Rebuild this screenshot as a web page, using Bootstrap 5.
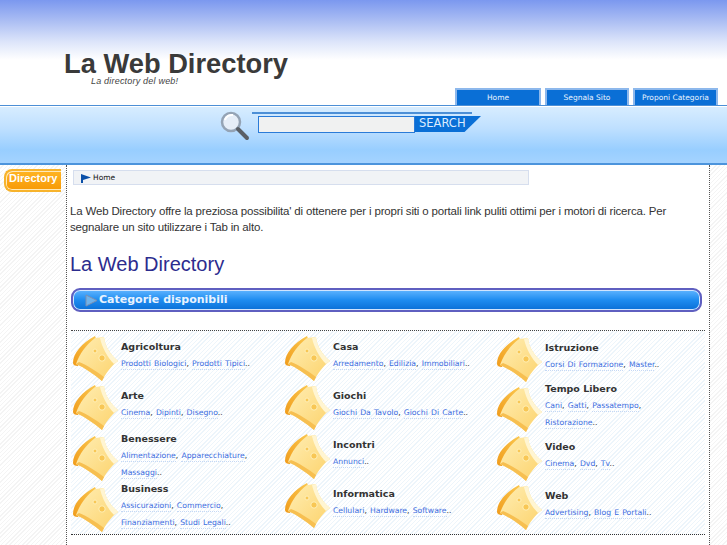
<!DOCTYPE html>
<html lang="it">
  <head>
    <meta charset="UTF-8" />
    <meta name="viewport" content="width=device-width, initial-scale=1.0" />
    <title>La Web Directory</title>
    <link
      href="https://cdn.jsdelivr.net/npm/bootstrap@5.3.2/dist/css/bootstrap.min.css"
      rel="stylesheet"
    />
    <style>
      body {
        font-family: "Liberation Sans", Arial, sans-serif;
        color: #333;
        background: #fff;
      }
      .top-head {
        height: 105px;
        padding: 51px 9px 0 64px;
        background: linear-gradient(#7b98ef 0, #a9bcf3 20px, #dde5fa 42px, #fff 60px);
      }
      .site-title {
        font-size: 27.3px;
        line-height: 26px;
        font-weight: 700;
        color: #3a3a3a;
        margin: 0;
      }
      .site-sub {
        font-size: 9px;
        line-height: 8px;
        font-style: italic;
        color: #444;
        margin: 0 0 0 27px;
        letter-spacing: 0.2px;
      }
      .tab-list {
        margin-top: auto;
        gap: 4px;
      }
      .tab-link {
        display: block;
        height: 17px;
        width: 86px;
        background: #0a6fd6;
        border: 2px solid #8db8ec;
        border-bottom: 0;
        color: #e8f3ff;
        font-family: "DejaVu Sans", sans-serif;
        font-size: 7.5px;
        line-height: 16px;
        text-align: center;
        text-decoration: none;
        white-space: nowrap;
      }
      .tab-mid {
        width: 84px;
      }
      .tab-last {
        width: 85px;
      }
      .search-band {
        height: 60px;
        border-top: 1px solid #4c8fd6;
        border-bottom: 2px solid #4c94dc;
        box-shadow: inset 0 1px 0 #fff;
        background: linear-gradient(#d8edff 0, #bfe0ff 22px, #98ceff 44px, #a4d3ff 100%);
        padding: 5px 0 0 220px;
      }
      .search-form {
        width: 262px;
        position: relative;
        padding: 5px 0 0 38px;
      }
      .search-form::before {
        content: "";
        position: absolute;
        left: 32px;
        top: 1px;
        width: 220px;
        height: 2px;
        background: #4c8fd6;
      }
      .search-input {
        width: 157px;
        height: 17px;
        border: 1px solid #2a7bd8;
        background: #f0f1f1;
        padding: 0;
      }
      .search-btn {
        width: 66px;
        height: 16px;
        border: 0;
        padding: 0 0 2px 4px;
        background: #0a6fd6;
        color: #dcecff;
        font-family: "DejaVu Sans", sans-serif;
        font-size: 11.5px;
        line-height: 14px;
        text-align: left;
        clip-path: polygon(0 0, 100% 0, 75% 100%, 0 100%);
      }
      .page-body {
        height: 380px;
        overflow: hidden;
      }
      .hatch-grey {
        background: repeating-linear-gradient(135deg, #fff 0 2px, #f4f4f4 2px 3px);
      }
      .side-col {
        width: 67px;
        flex: none;
        padding: 4px 0 0 4px;
        border-right: 1px dotted #555;
      }
      .side-btn {
        height: 23px;
        width: 57px;
        border-radius: 8px 0 0 8px;
        border: 2px solid #f7b32c;
        border-right: 0;
        box-shadow: inset 1px 1px 0 #ffe9b8, inset 0 -1px 0 #ffe9b8;
        background: linear-gradient(#ffb423, #f79a06);
        color: #fff;
        font-size: 11px;
        font-weight: 700;
        line-height: 14px;
        padding: 0 0 0 3px;
        white-space: nowrap;
        overflow: hidden;
      }
      .main-col {
        width: 642px;
        flex: none;
        padding: 5px 0 0 3px;
        background: #fff;
      }
      .right-col {
        flex: 1;
        border-left: 1px dotted #555;
      }
      .crumb-bar {
        width: 456px;
        height: 15px;
        margin-left: 3px;
        padding: 1px 0 0 7px;
        background: #f1f3f6;
        border: 1px solid #d6deee;
        font-family: "DejaVu Sans", sans-serif;
        font-size: 7.5px;
        line-height: 12px;
        color: #111;
      }
      .home-label {
        margin-left: 2px;
      }
      .intro-text {
        font-size: 11.5px;
        letter-spacing: -0.17px;
        line-height: 16px;
        margin: 18px 0 0;
        width: 610px;
        color: #333;
      }
      .dir-title {
        font-size: 20px;
        line-height: 24px;
        font-weight: 400;
        color: #2c2c8e;
        margin: 17px 0 0;
      }
      .cat-bar {
        width: 631px;
        height: 24px;
        margin: 12px 0 0 1px;
        padding-left: 12px;
        gap: 1px;
        border: 2px solid #5f5fc0;
        border-radius: 9px;
        box-shadow: inset 0 0 0 1px #cfe4ff;
        background: linear-gradient(#5fb4ff 0, #1e8cf0 50%, #0a6fd6 100%);
        color: #e8f3ff;
        font-family: "DejaVu Sans", sans-serif;
        font-size: 11px;
        font-weight: 700;
        line-height: 20px;
        white-space: nowrap;
      }
      .cat-grid {
        width: 634px;
        margin: 18px 0 0 1px;
        padding-top: 2px;
        padding-bottom: 1px;
        border-top: 1px dotted #444;
        border-bottom: 1px dotted #333;
        background: repeating-linear-gradient(135deg, #fff 0 2px, #edf5fb 2px 3px);
      }
      .cat-stack {
        width: 212px;
        flex: none;
      }
      .cat-cell {
        height: 49px;
        margin-left: -1px;
      }
      .cat-h50 {
        height: 50px;
      }
      .cat-h51 {
        height: 51px;
      }
      .cat-h52 {
        height: 52px;
      }
      .cat-icon {
        width: 50px;
        height: 50px;
        flex: none;
        margin-right: 1px;
      }
      .cat-text {
        max-width: 150px;
        margin-bottom: 4px;
      }
      .cat-name {
        font-family: "DejaVu Sans", sans-serif;
        font-size: 9.5px;
        line-height: 14px;
        font-weight: 700;
        color: #333;
      }
      .cat-links {
        font-family: "DejaVu Sans", sans-serif;
        font-size: 7.7px;
        line-height: 17px;
        margin-top: 1px;
        color: #333;
        word-spacing: 0.7px;
      }
      .cat-links a {
        color: #3c6de0;
        text-decoration: none;
        border-bottom: 1px dotted #c5d8f5;
        padding-bottom: 1px;
      }
    </style>
  </head>
  <body>
    <svg width="0" height="0" class="d-block">
      <defs>
        <linearGradient id="pieGrad" x1="0" y1="0" x2="1" y2="1">
          <stop offset="0" stop-color="#ffeeb4" />
          <stop offset="1" stop-color="#fcd26a" />
        </linearGradient>
        <linearGradient id="wingGrad" x1="1" y1="0" x2="0" y2="1">
          <stop offset="0" stop-color="#fbc850" />
          <stop offset="1" stop-color="#f09c1c" />
        </linearGradient>
        <symbol id="catIcon" viewBox="0 0 50 50">
          <path d="M3 30C3 20 12 10 25 3L27 8C17 14 11 22 8 33C5 33 3 32 3 30Z" fill="url(#wingGrad)" />
          <path d="M25 5L34 4C35 14 41 22 48 28C41 33 36 40 32 48C24 41 15 35 6 31C10 20 16 12 25 5Z" fill="url(#pieGrad)" />
          <path d="M6 31C15 35 24 41 32 48L34 44C26 38 17 32 9 29Z" fill="#f7bf50" />
          <path d="M34 4C35 14 41 22 48 28L44 31C37 24 32 14 30 5Z" fill="#fff5d2" />
          <circle cx="32" cy="25" r="3.2" fill="#f8c755" stroke="#fff0b8" />
          <circle cx="25" cy="18" r="2" fill="#f8c755" stroke="#fff0b8" />
        </symbol>
      </defs>
    </svg>

    <!-- Header -->
    <header class="top-head d-flex flex-column">
      <h1 class="site-title">La Web Directory</h1>
      <p class="site-sub">La directory del web!</p>
      <div class="tab-list d-flex justify-content-end">
        <a class="tab-link" href="#">Home</a>
        <a class="tab-link tab-mid" href="#">Segnala Sito</a>
        <a class="tab-link tab-last" href="#">Proponi Categoria</a>
      </div>
    </header>

    <!-- Search -->
    <div class="search-band">
      <form class="search-form d-flex align-items-start">
        <svg class="position-absolute top-0 start-0" width="30" height="30" viewBox="0 0 30 30">
          <circle cx="11" cy="11" r="9" fill="#e6eef8" stroke="#94a3b5" stroke-width="2.5" />
          <path d="M5 9a7 7 0 0 1 8-5" fill="none" stroke="#fff" stroke-width="2" />
          <path d="M18 18L27 27" stroke="#5a5f66" stroke-width="4" stroke-linecap="round" />
        </svg>
        <input class="search-input" type="text" />
        <button class="search-btn" type="button">SEARCH</button>
      </form>
    </div>

    <div class="page-body d-flex hatch-grey">
      <aside class="side-col">
        <div class="side-btn">Directory</div>
      </aside>

      <main class="main-col">
        <div class="crumb-bar d-flex align-items-center">
          <svg width="10" height="9" viewBox="0 0 10 9">
            <path d="M0 0L10 3.5L2 6V9H0Z" fill="#0a4fa8" />
          </svg>
          <span class="home-label">Home</span>
        </div>
        <p class="intro-text">
          La Web Directory offre la preziosa possibilita' di ottenere per i propri siti o portali link puliti ottimi per i motori di ricerca. Per segnalare un sito utilizzare i Tab in alto.
        </p>
        <h2 class="dir-title">La Web Directory</h2>
        <div class="cat-bar d-flex align-items-center">
          <svg width="13" height="13" viewBox="0 0 13 13">
            <path d="M1 1L12 6.5L1 12Z" fill="#6fb2ea" stroke="#7d8fb0" />
          </svg>
          <span>Categorie disponibili</span>
        </div>

        <div class="cat-grid d-flex" id="catGrid"></div>
      </main>

      <div class="right-col"></div>
    </div>

    <script src="https://cdn.jsdelivr.net/npm/bootstrap@5.3.2/dist/js/bootstrap.bundle.min.js"></script>
    <script>
      // three columns, rows are not all the same height in the original table
      const columns = [
        [
          ["Agricoltura", ["Prodotti Biologici", "Prodotti Tipici"], ""],
          ["Arte", ["Cinema", "Dipinti", "Disegno"], "cat-h50"],
          ["Benessere", ["Alimentazione", "Apparecchiature", "Massaggi"], "cat-h52"],
          ["Business", ["Assicurazioni", "Commercio", "Finanziamenti", "Studi Legali"], ""],
        ],
        [
          ["Casa", ["Arredamento", "Edilizia", "Immobiliari"], ""],
          ["Giochi", ["Giochi Da Tavolo", "Giochi Di Carte"], ""],
          ["Incontri", ["Annunci"], ""],
          ["Informatica", ["Cellulari", "Hardware", "Software"], ""],
        ],
        [
          ["Istruzione", ["Corsi Di Formazione", "Master"], "cat-h51"],
          ["Tempo Libero", ["Cani", "Gatti", "Passatempo", "Ristorazione"], ""],
          ["Video", ["Cinema", "Dvd", "Tv"], ""],
          ["Web", ["Advertising", "Blog E Portali"], ""],
        ],
      ];

      let html = "";
      columns.forEach((col) => {
        html += `<div class="cat-stack">`;
        col.forEach((cat) => {
          const links = cat[1].map((l) => `<a href="#">${l}</a>`).join(", ");
          html += `
            <div class="cat-cell ${cat[2]} d-flex align-items-center">
              <svg class="cat-icon"><use href="#catIcon" /></svg>
              <div class="cat-text">
                <div class="cat-name">${cat[0]}</div>
                <div class="cat-links">${links}..</div>
              </div>
            </div>`;
        });
        html += `</div>`;
      });
      document.getElementById("catGrid").innerHTML = html;
    </script>
  </body>
</html>
